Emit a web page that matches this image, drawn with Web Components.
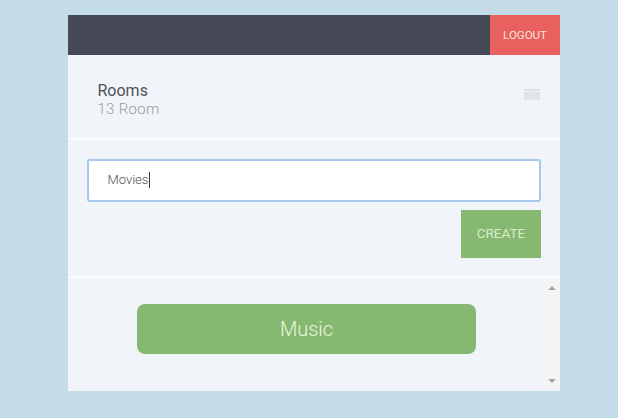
<!DOCTYPE html>
<html>
<head>
<meta charset="utf-8">
<title>Rooms</title>
<style>
html, body { margin: 0; height: 100%; overflow: hidden; }
body { background: #c3dce8; font-family: Roboto, "Liberation Sans", sans-serif; padding: 15px 0 0 68px; box-sizing: border-box; }
</style>
</head>
<body>
<rooms-app></rooms-app>
<script>
class TopBar extends HTMLElement {
    constructor() {
        super();
        this.attachShadow({mode: 'open'});
        this.shadowRoot.innerHTML = `
            <style>
            :host { display: flex; justify-content: flex-end; height: 40px; background: #454855; }
            div {
                width: 70px;
                display: flex;
                align-items: center;
                justify-content: center;
                background: #e8615f;
                color: #fbe3da;
                font-size: 11.5px;
                cursor: pointer;
            }
            </style>
            <div>LOGOUT</div>
        `;
    }
}

class RoomsHeader extends HTMLElement {
    constructor() {
        super();
        this.attachShadow({mode: 'open'});
        this.shadowRoot.innerHTML = `
            <style>
            :host {
                display: flex;
                justify-content: space-between;
                align-items: flex-start;
                height: 85px;
                box-sizing: border-box;
                padding: 27px 20px 0 29.5px;
                border-bottom: 2px solid #fbfcfe;
            }
            .title { font-size: 16px; line-height: 18px; color: #4f5258; }
            .count { font-size: 15px; line-height: 18px; font-weight: 300; color: #989ba1; letter-spacing: 0.3px; }
            svg { display: block; margin: 6px 0 0; }
            </style>
            <div>
                <div class="title">Rooms</div>
                <div class="count">13 Room</div>
            </div>
            <svg width="16" height="13" viewBox="0 0 16 13">
                <rect x="5" y="0" width="6" height="1" fill="#eceef1"/>
                <rect x="0" y="1" width="16" height="2" fill="#dfe1e5"/>
                <rect x="0" y="3" width="16" height="1" fill="#eef0f3"/>
                <rect x="0" y="4" width="16" height="8" fill="#e2e4e8"/>
            </svg>
        `;
    }
}

class CreateForm extends HTMLElement {
    constructor() {
        super();
        this.attachShadow({mode: 'open'});
        this.shadowRoot.innerHTML = `
            <style>
            :host {
                display: flex;
                flex-direction: column;
                align-items: flex-end;
                gap: 8px;
                height: 138px;
                box-sizing: border-box;
                padding: 19px 19px 0;
                border-bottom: 2px solid #fbfcfe;
            }
            .field {
                align-self: stretch;
                height: 43px;
                box-sizing: border-box;
                display: flex;
                align-items: center;
                padding: 0 0 2px 18.5px;
                background: #fff;
                border: 2px solid #a9c8ef;
                border-radius: 3px;
                font-size: 13px;
                font-weight: 300;
                color: #4c4f55;
            }
            .caret { width: 1px; height: 16px; background: #33363c; margin-left: 1px; }
            button {
                width: 80px;
                height: 48px;
                padding: 0 0 2px;
                border: 0;
                background: #86b872;
                color: #d9ecc9;
                font: 13.5px Roboto, "Liberation Sans", sans-serif;
                cursor: pointer;
            }
            </style>
            <div class="field"><span>Movies</span><span class="caret"></span></div>
            <button>CREATE</button>
        `;
    }
}

class RoomList extends HTMLElement {
    constructor() {
        super();
        this.attachShadow({mode: 'open'});
        this.shadowRoot.innerHTML = `
            <style>
            :host { display: flex; height: 113px; }
            .items { flex: 1; box-sizing: border-box; padding: 26px 0 0 69px; }
            .bar {
                width: 17px;
                display: flex;
                flex-direction: column;
                justify-content: space-between;
                align-items: center;
                padding: 8px 0 8px;
                box-sizing: border-box;
                background: #f3f4f6;
            }
            i { width: 0; height: 0; border: 4px solid transparent; }
            .up { border-top: 0; border-bottom: 4px solid #a3a5a9; }
            .down { border-bottom: 0; border-top: 4px solid #a3a5a9; }
            </style>
            <div class="items"><slot></slot></div>
            <div class="bar"><i class="up"></i><i class="down"></i></div>
        `;
    }
}

class RoomItem extends HTMLElement {
    constructor() {
        super();
        this.attachShadow({mode: 'open'});
        this.shadowRoot.innerHTML = `
            <style>
            :host {
                display: flex;
                align-items: center;
                justify-content: center;
                width: 339px;
                height: 50px;
                border-radius: 8px;
                background: #86b872;
                color: #e9f5de;
                font-size: 20px;
                font-weight: 300;
                cursor: pointer;
            }
            </style>
            <slot></slot>
        `;
    }
}

class RoomsApp extends HTMLElement {
    constructor() {
        super();
        this.attachShadow({mode: 'open'});
        this.shadowRoot.innerHTML = `
            <style>
            :host { display: block; width: 492px; height: 376px; background: #f1f5fa; }
            </style>
            <top-bar></top-bar>
            <rooms-header></rooms-header>
            <create-form></create-form>
            <room-list><room-item>Music</room-item></room-list>
        `;
    }
}

customElements.define('top-bar', TopBar);
customElements.define('rooms-header', RoomsHeader);
customElements.define('create-form', CreateForm);
customElements.define('room-item', RoomItem);
customElements.define('room-list', RoomList);
customElements.define('rooms-app', RoomsApp);
</script>
</body>
</html>
